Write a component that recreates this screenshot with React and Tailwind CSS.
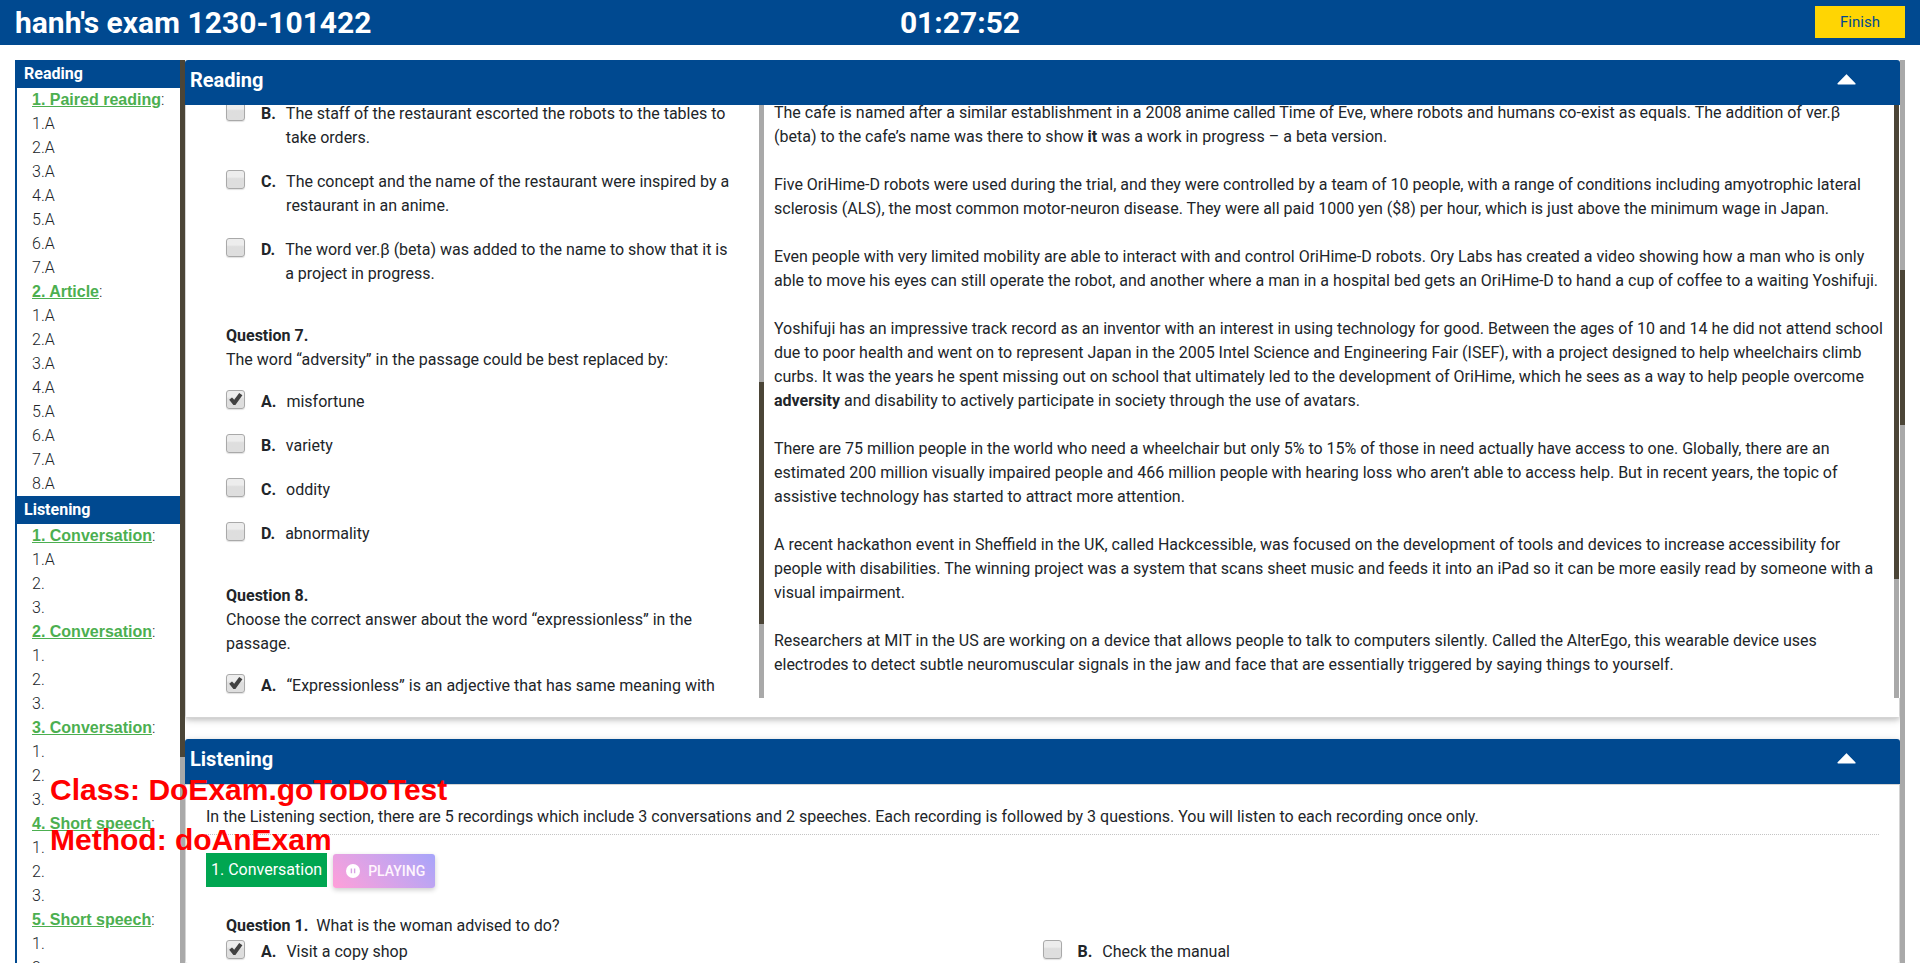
const READING_NAV = [
  { title: "1. Paired reading", items: ["1.A", "2.A", "3.A", "4.A", "5.A", "6.A", "7.A"] },
  { title: "2. Article", items: ["1.A", "2.A", "3.A", "4.A", "5.A", "6.A", "7.A", "8.A"] },
];

const LISTENING_NAV = [
  { title: "1. Conversation", items: ["1.A", "2.", "3."] },
  { title: "2. Conversation", items: ["1.", "2.", "3."] },
  { title: "3. Conversation", items: ["1.", "2.", "3."] },
  { title: "4. Short speech", items: ["1.", "2.", "3."] },
  { title: "5. Short speech", items: ["1.", "2.", "3."] },
];

function NavSection({ title, groups }) {
  return (
    <section>
      <h2 className="bg-[#004990] pr-2 pl-[7px] text-base leading-7 font-bold text-white">{title}</h2>
      {groups.map((g) => (
        <div key={g.title} className="pl-[15px] leading-6">
          <div className="font-light">
            <a href="#" className="font-['Liberation_Sans',Arial,sans-serif] font-bold text-[#4caf50] underline">
              {g.title}
            </a>
            :
          </div>
          <ul>
            {g.items.map((it) => (
              <li key={it} className="font-light">{it}</li>
            ))}
          </ul>
        </div>
      ))}
    </section>
  );
}

function Choice({ id, letter, checked, children }) {
  return (
    <div className="flex items-start leading-6">
      <span className="mr-4 grid size-[19px] shrink-0">
        <input
          id={id}
          type="checkbox"
          defaultChecked={checked}
          className="peer col-start-1 row-start-1 size-[19px] appearance-none rounded-[3px] border border-[#a9a9a9] bg-linear-to-b from-[#ededed] from-35% to-[#dedede] to-45% shadow-[0_1px_1px_rgba(0,0,0,0.12)]"
        />
        <svg viewBox="0 0 19 19" className="pointer-events-none invisible z-10 col-start-1 row-start-1 size-[19px] peer-checked:visible">
          <path d="M3.2 9.8 L6 7.6 L8.2 9.8 L13.2 3 L16.4 5.2 L9.4 15 L7.4 15 Z" fill="#424242" />
        </svg>
      </span>
      <label htmlFor={id} className="flex gap-[10px]">
        <b>{letter}.</b>
        <span>{children}</span>
      </label>
    </div>
  );
}

function CardHeader({ title }) {
  return (
    <div className="flex h-[45px] items-center justify-between bg-[#004990] pr-11 pb-[6px] pl-[5px] text-white">
      <h2 className="text-xl font-bold">{title}</h2>
      <button type="button" aria-label={"Collapse " + title}>
        <svg viewBox="0 0 19 11" className="h-[11px] w-[19px]">
          <path d="M9.5 1.2 L17.8 9.8 H1.2 Z" fill="#fff" stroke="#fff" strokeWidth="1.6" strokeLinejoin="round" />
        </svg>
      </button>
    </div>
  );
}

const CARD =
  "overflow-hidden rounded-[3px] bg-white shadow-[0_2px_5px_rgba(0,0,0,0.16),0_2px_10px_rgba(0,0,0,0.12)]";

export default function App() {
  return (
    <div className="relative flex h-screen flex-col overflow-hidden bg-white font-[Roboto,sans-serif] text-base text-[#212529]">
      <header className="grid h-[45px] shrink-0 grid-cols-[1fr_auto_1fr] items-center bg-[#004990] px-[15px] text-white">
        <h1 className="text-[30px] leading-8 font-bold">hanh's exam 1230-101422</h1>
        <div className="text-[30px] leading-8 font-bold">01:27:52</div>
        <button type="button" className="mb-px h-8 w-[90px] justify-self-end bg-[#ffd503] text-[15px] text-[#004990]">
          Finish
        </button>
      </header>

      <div className="flex min-h-0 flex-1 px-[15px] pt-[15px]">
        <nav className="flex w-[170px] shrink-0 overflow-hidden">
          <div className="flex-1 border-l-2 border-[#004990]">
            <NavSection title="Reading" groups={READING_NAV} />
            <NavSection title="Listening" groups={LISTENING_NAV} />
          </div>
          <div className="w-[5px] bg-[#a9a9a9]">
            <div className="h-[697px] bg-[#4b4537]" />
          </div>
        </nav>

        <main className="flex min-w-0 flex-1 flex-col gap-[21px] overflow-hidden">
          <section className={CARD}>
            <CardHeader title="Reading" />
            <div className="flex h-[593px] border-l border-[#d4d4d4]">
              <div className="flex w-[578px] shrink-0 overflow-hidden">
                <div className="-mt-[3px] flex-1 space-y-[38px] pr-[26px] pl-10">
                  <div className="space-y-5">
                    <Choice id="q6b" letter="B">The staff of the restaurant escorted the robots to the tables to take orders.</Choice>
                    <Choice id="q6c" letter="C">The concept and the name of the restaurant were inspired by a restaurant in an anime.</Choice>
                    <Choice id="q6d" letter="D">The word ver.β (beta) was added to the name to show that it is a project in progress.</Choice>
                  </div>
                  <div>
                    <p className="mb-[18px]">
                      <b>Question 7.</b>
                      <br />
                      The word “adversity” in the passage could be best replaced by:
                    </p>
                    <div className="space-y-5">
                      <Choice id="q7a" letter="A" checked>misfortune</Choice>
                      <Choice id="q7b" letter="B">variety</Choice>
                      <Choice id="q7c" letter="C">oddity</Choice>
                      <Choice id="q7d" letter="D">abnormality</Choice>
                    </div>
                  </div>
                  <div>
                    <p className="mb-[18px]">
                      <b>Question 8.</b>
                      <br />
                      Choose the correct answer about the word “expressionless” in the passage.
                    </p>
                    <Choice id="q8a" letter="A" checked>“Expressionless” is an adjective that has same meaning with</Choice>
                  </div>
                </div>
                <div className="w-[5px] bg-[#a9a9a9] pt-[277px]">
                  <div className="h-[242px] bg-[#4b4537]" />
                </div>
              </div>

              <div className="flex min-w-0 flex-1 overflow-hidden">
                <article className="-mt-1 flex-1 space-y-6 px-[10px]">
                  <p>The cafe is named after a similar establishment in a 2008 anime called Time of Eve, where robots and humans co-exist as equals. The addition of ver.β (beta) to the cafe’s name was there to show <b>it</b> was a work in progress – a beta version.</p>
                  <p>Five OriHime-D robots were used during the trial, and they were controlled by a team of 10 people, with a range of conditions including amyotrophic lateral sclerosis (ALS), the most common motor-neuron disease. They were all paid 1000 yen ($8) per hour, which is just above the minimum wage in Japan.</p>
                  <p>Even people with very limited mobility are able to interact with and control OriHime-D robots. Ory Labs has created a video showing how a man who is only able to move his eyes can still operate the robot, and another where a man in a hospital bed gets an OriHime-D to hand a cup of coffee to a waiting Yoshifuji.</p>
                  <p>Yoshifuji has an impressive track record as an inventor with an interest in using technology for good. Between the ages of 10 and 14 he did not attend school due to poor health and went on to represent Japan in the 2005 Intel Science and Engineering Fair (ISEF), with a project designed to help wheelchairs climb curbs. It was the years he spent missing out on school that ultimately led to the development of OriHime, which he sees as a way to help people overcome <b>adversity</b> and disability to actively participate in society through the use of avatars.</p>
                  <p>There are 75 million people in the world who need a wheelchair but only 5% to 15% of those in need actually have access to one. Globally, there are an estimated 200 million visually impaired people and 466 million people with hearing loss who aren’t able to access help. But in recent years, the topic of assistive technology has started to attract more attention.</p>
                  <p>A recent hackathon event in Sheffield in the UK, called Hackcessible, was focused on the development of tools and devices to increase accessibility for people with disabilities. The winning project was a system that scans sheet music and feeds it into an iPad so it can be more easily read by someone with a visual impairment.</p>
                  <p>Researchers at MIT in the US are working on a device that allows people to talk to computers silently. Called the AlterEgo, this wearable device uses electrodes to detect subtle neuromuscular signals in the jaw and face that are essentially triggered by saying things to yourself.</p>
                </article>
                <div className="mr-px w-[5px] bg-[#a9a9a9]">
                  <div className="h-[474px] bg-[#4b4537]" />
                </div>
              </div>
            </div>
            <div className="h-5 border-r border-b border-l border-[#d4d4d4]" />
          </section>

          <section className={CARD + " flex-1"}>
            <CardHeader title="Listening" />
            <div className="h-full border-x border-t border-[#d4d4d4] px-5 pt-5">
              <p className="border-b border-dotted border-[#c4c4c4] pb-[5px]">
                In the Listening section, there are 5 recordings which include 3 conversations and 2 speeches. Each recording is followed by 3 questions. You will listen to each recording once only.
              </p>
              <div className="flex items-start gap-[6px] pt-[18px]">
                <span className="h-[34px] bg-[#00a651] px-[5px] leading-[34px] text-white">1. Conversation</span>
                <button
                  type="button"
                  className="mt-px flex h-[34px] items-center gap-2 rounded-[3px] bg-linear-45 from-[#ff9fd9] to-[#a6a4fa] px-[10px] text-sm font-medium text-[#fff5fd] shadow-[0_2px_5px_rgba(0,0,0,0.2)]"
                >
                  <svg viewBox="0 0 14 14" className="ml-[3px] size-[14px]">
                    <circle cx="7" cy="7" r="7" fill="#fff" />
                    <path d="M5.4 4.6V9.2M8.6 4.6V9.2" stroke="#d8a2e4" strokeWidth="1.4" />
                  </svg>
                  PLAYING
                </button>
              </div>
              <div className="px-5 pt-[26px]">
                <p>
                  <b className="mr-1">Question 1.</b> What is the woman advised to do?
                </p>
                <div className="grid grid-cols-2 pt-[2px]">
                  <Choice id="l1a" letter="A" checked>Visit a copy shop</Choice>
                  <Choice id="l1b" letter="B">Check the manual</Choice>
                </div>
              </div>
            </div>
          </section>
        </main>

        <div className="w-[5px] shrink-0 bg-[#a9a9a9] pt-[210px]">
          <div className="h-[155px] bg-[#4b4537]" />
        </div>
      </div>

      <div className="pointer-events-none absolute top-[765px] left-[50px] font-['Liberation_Sans',Arial,sans-serif] text-[30px] leading-[50px] font-bold text-[#ff0000]">
        <p>Class: DoExam.goToDoTest</p>
        <p>Method: doAnExam</p>
      </div>
    </div>
  );
}
